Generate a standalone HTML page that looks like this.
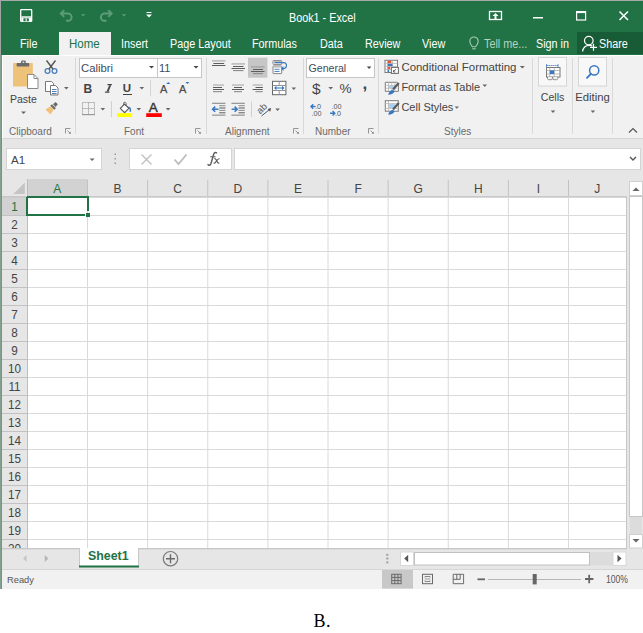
<!DOCTYPE html>
<html><head><meta charset="utf-8">
<style>
*{margin:0;padding:0;box-sizing:border-box}
html,body{width:643px;height:633px;background:#fff;overflow:hidden;position:relative;font-family:"Liberation Sans",sans-serif}
.a{position:absolute}
.t{position:absolute;white-space:nowrap;line-height:1}
svg{position:absolute;overflow:visible}
#win{left:0;top:0;width:643px;height:589px;background:#f1f1f1}
#topline{left:0;top:0;width:643px;height:1px;background:#a8a8a8}
#leftline{left:0;top:55px;width:2px;height:534px;background:linear-gradient(90deg,#84a08e 0,#84a08e 1px,#6a9c7c 1px)}
#title{left:1px;top:1px;width:642px;height:54px;background:#217346;border-left:0}
.w{color:#fff}
.tab{top:37.7px;font-size:12px;color:#fff;transform:scaleX(0.9);transform-origin:0 0}
#ribbon{left:2px;top:55px;width:641px;height:84px;background:#f1f1f1;border-bottom:1px solid #d5d5d5;border-top:1px solid #fff;border-left:1px solid #fff}
.gl{top:127px;font-size:10px;color:#6a6a6a}
.ch{top:183.2px;text-align:center;font-size:12px}
.rh{left:2px;width:25px;text-align:center;font-size:13px;transform:scaleX(0.9)}
.sep{position:absolute;width:1px;background:#d8d8d8}
.rt{font-size:11px;color:#444}
#fbar{left:2px;top:139px;width:641px;height:40px;background:#e6e6e6}
#grid{left:2px;top:179px;width:625px;height:369px;background:#fff;overflow:hidden}
#tabs{left:2px;top:548px;width:641px;height:21px;background:#e6e6e6}
#status{left:2px;top:569px;width:641px;height:20px;background:#f1f1f1;border-top:1px solid #d5d5d5}
</style></head><body>
<div class="a" id="win"></div>
<div class="a" id="topline"></div>
<div class="a" id="title"></div>
<div class="a" style="left:0;top:0;width:1px;height:55px;background:#a3a3a3"></div>

<!-- QAT icons -->
<svg style="left:0;top:0" width="643" height="32">
  <!-- save -->
  <rect x="20.7" y="9.7" width="11" height="11.6" rx="0.6" fill="none" stroke="#fff" stroke-width="1.3"/>
  <rect x="21.3" y="16.3" width="9.8" height="1.1" fill="#fff"/>
  <rect x="21.3" y="17.4" width="9.8" height="3.8" fill="#fff"/>
  <rect x="23.4" y="18.3" width="5.4" height="3" fill="#217346"/>
  <rect x="25.6" y="18.3" width="1.1" height="3" fill="#fff"/>
  <!-- undo -->
  <g fill="none" stroke="#5d9c78" stroke-width="2">
    <path d="M61 13.6 H68 A3.6 3.6 0 0 1 68 20.8 H66"/>
    <path d="M64.2 10.3 L60.9 13.6 L64.2 16.9"/>
    <path d="M111.5 13.6 H104.5 A3.6 3.6 0 0 0 104.5 20.8 H106.5"/>
    <path d="M108.3 10.3 L111.6 13.6 L108.3 16.9"/>
  </g>
  <path d="M80.8 14.2 h4.6 l-2.3 2.3z" fill="#5d9c78"/>
  <path d="M121.8 14.2 h4.6 l-2.3 2.3z" fill="#5d9c78"/>
  <!-- customize -->
  <rect x="146.5" y="12" width="5" height="1" fill="#fff"/>
  <path d="M146 14.5 h6 l-3 3z" fill="#fff"/>
  <!-- ribbon display options -->
  <rect x="489.5" y="11.5" width="12" height="8" fill="none" stroke="#fff" stroke-width="1.3"/>
  <path d="M495.5 13 l-3 3 h2 v3.5 h2 v-3.5 h2z" fill="#fff"/>
  <!-- minimize -->
  <rect x="533" y="17" width="10" height="1.5" fill="#fff"/>
  <!-- maximize -->
  <rect x="576.6" y="11.6" width="9" height="8.4" fill="none" stroke="#fff" stroke-width="1.2"/>
  <rect x="576.6" y="11.6" width="9" height="1.5" fill="#fff"/>
  <!-- close -->
  <path d="M619.5 11.5 L628 20 M628 11.5 L619.5 20" stroke="#fff" stroke-width="1.5"/>
</svg>

<div class="t w" style="left:289px;top:11.7px;font-size:12px;transform:scaleX(0.9);transform-origin:0 0">Book1 - Excel</div>

<!-- tabs -->
<div class="a" style="left:59px;top:32px;width:52px;height:24px;background:#f1f1f1"></div>
<div class="t tab" style="left:20px">File</div>
<div class="t tab" style="left:69.3px;color:#217346;transform:scaleX(0.96)">Home</div>
<div class="t tab" style="left:121px">Insert</div>
<div class="t tab" style="left:170px">Page Layout</div>
<div class="t tab" style="left:252px">Formulas</div>
<div class="t tab" style="left:320px">Data</div>
<div class="t tab" style="left:365px">Review</div>
<div class="t tab" style="left:422px">View</div>
<svg style="left:0;top:0" width="643" height="60">
  <g fill="none" stroke="#a9cbb6" stroke-width="1.1">
    <path d="M472.5 46.8 C470.5 44.5 469.8 42.5 469.8 41.2 A4.2 4.2 0 0 1 478.2 41.2 C478.2 42.5 477.5 44.5 475.5 46.8 Z"/>
    <path d="M472.3 48.8 h3.4"/>
  </g>
</svg>
<div class="t tab" style="left:484px;color:#b5d3c0">Tell me...</div>
<div class="t tab" style="left:536px">Sign in</div>
<div class="a" style="left:577px;top:32px;width:66px;height:22px;background:#185c37"></div>
<svg style="left:0;top:0" width="643" height="60">
  <g fill="none" stroke="#fff" stroke-width="1.2">
    <circle cx="588.8" cy="40.6" r="4.3"/>
    <path d="M582.6 51.5 C583 47.5 585.8 45.3 589.5 45.3 C590.5 45.3 591.5 45.6 592.3 46"/>
    <path d="M593.5 43.8 v7 M590 47.3 h7"/>
  </g>
</svg>
<div class="t tab" style="left:599px">Share</div>

<div class="a" id="ribbon"></div>
<div class="a" id="leftline"></div>

<!-- ===== RIBBON CONTENT ===== -->
<!-- group separators -->
<div class="sep" style="left:75px;top:58px;height:76px"></div>
<div class="sep" style="left:206px;top:58px;height:76px"></div>
<div class="sep" style="left:303px;top:58px;height:76px"></div>
<div class="sep" style="left:378px;top:58px;height:76px"></div>
<div class="sep" style="left:532px;top:58px;height:76px"></div>
<div class="sep" style="left:572px;top:58px;height:76px"></div>
<div class="sep" style="left:612px;top:58px;height:76px"></div>
<!-- group labels -->
<div class="t gl" style="left:9px">Clipboard</div>
<div class="t gl" style="left:124px">Font</div>
<div class="t gl" style="left:225px">Alignment</div>
<div class="t gl" style="left:315px">Number</div>
<div class="t gl" style="left:444px">Styles</div>

<svg style="left:0;top:0" width="643" height="140">
  <!-- dialog launchers -->
  <g fill="none" stroke="#8a8a8a" stroke-width="0.9">
    <path d="M65.5 133.5 v-5 h5"/><path d="M67.5 130.5 l3 3"/>
    <path d="M195.5 133.5 v-5 h5"/><path d="M197.5 130.5 l3 3"/>
    <path d="M293.5 133.5 v-5 h5"/><path d="M295.5 130.5 l3 3"/>
    <path d="M368.5 133.5 v-5 h5"/><path d="M370.5 130.5 l3 3"/>
  </g>
  <g fill="#8a8a8a">
    <path d="M68.5 133.8 h2.3 v-2.3z"/><path d="M198.5 133.8 h2.3 v-2.3z"/><path d="M296.5 133.8 h2.3 v-2.3z"/><path d="M371.5 133.8 h2.3 v-2.3z"/>
  </g>

  <!-- Paste clipboard -->
  <rect x="13" y="63" width="19.8" height="23.5" rx="0.5" fill="#efc27a"/>
  <rect x="16.6" y="63" width="12.6" height="3.6" rx="0.8" fill="#6b6b6b"/>
  <rect x="21" y="60.6" width="4.8" height="3" rx="1.4" fill="#6b6b6b"/>
  <rect x="22.6" y="61.6" width="1.6" height="1.3" fill="#f1f1f1"/>
  <path d="M27.5 74.5 h6.5 l4 4 v10 h-10.5z" fill="#fff" stroke="#8a8a8a" stroke-width="1"/>
  <path d="M34 74.5 v4 h4" fill="none" stroke="#8a8a8a" stroke-width="1"/>
  <path d="M21 111.5 h5 l-2.5 2.5z" fill="#666"/>
  <!-- scissors -->
  <g fill="none" stroke="#4a7fbd" stroke-width="1.3">
    <circle cx="47.5" cy="71" r="2.4"/><circle cx="54.5" cy="71" r="2.4"/>
  </g>
  <path d="M46.5 60.5 L53 69 M55.5 60.5 L49 69" stroke="#555" stroke-width="1.4" fill="none"/>
  <!-- copy -->
  <g fill="#fff" stroke="#777" stroke-width="1">
    <path d="M45.5 81.5 h6 l2 2 v8 h-8z"/>
    <path d="M50.5 85.5 h5 l2.5 2.5 v7 h-7.5z"/>
  </g>
  <g stroke="#4a7fbd" stroke-width="1"><path d="M52 89.5 h4.5 M52 91.5 h4.5 M52 93.5 h4.5"/></g>
  <path d="M64 87 h4.6 l-2.3 2.4z" fill="#666"/>
  <!-- format painter -->
  <path d="M45.5 109.5 l5 -3.2 l3.2 3.2 l-3.2 5 z" fill="#efc27a"/>
  <path d="M50.3 105.8 l4 4 l1.6 -1.6 l-4 -4z" fill="#6b6b6b"/>
  <path d="M53 104.3 l2.6 -2.2 l2.2 2.2 l-2.2 2.6z" fill="#6b6b6b"/>

  <!-- Font name / size boxes -->
  <rect x="79.5" y="58.5" width="78" height="19" fill="#fff" stroke="#c6c6c6"/>
  <rect x="157.5" y="58.5" width="44" height="19" fill="#fff" stroke="#c6c6c6"/>
  <path d="M149 66 h5 l-2.5 2.5z" fill="#444"/>
  <path d="M193.5 66 h5 l-2.5 2.5z" fill="#444"/>
  <!-- U dropdown etc -->
  <path d="M139.5 87 h4.6 l-2.3 2.4z" fill="#666"/>
  <rect x="150" y="80" width="1" height="16" fill="#d4d4d4"/>
  <!-- grow/shrink carets -->
  <path d="M166.2 84 l2.1 -2 l2.1 2z" fill="#3a78c2"/>
  <path d="M185.3 82 l2.1 2 l2.1 -2z" fill="#3a78c2"/>
  <!-- borders -->
  <g fill="none" stroke="#9a9a9a" stroke-width="1" stroke-dasharray="1.2 0.8">
    <rect x="82.5" y="102.5" width="12" height="12"/>
  </g>
  <path d="M88.5 102.5 v12 M82.5 108.5 h12" stroke="#9a9a9a" stroke-width="1" stroke-dasharray="1.2 0.8"/>
  <path d="M82 114.6 h13" stroke="#9a9a9a" stroke-width="1.2"/>
  <path d="M100.5 108 h4.6 l-2.3 2.4z" fill="#666"/>
  <rect x="111" y="101" width="1" height="16" fill="#d0d0d0"/>
  <!-- fill color -->
  <path d="M120.3 108.3 l4.3 -4.3 l4.3 4.3 l-4.3 4.3 z" fill="#fff" stroke="#555" stroke-width="1.1"/>
  <path d="M123.5 105 v-1.5 a1.3 1.3 0 0 1 2.6 0 v2.5" fill="none" stroke="#666" stroke-width="0.9"/>
  <path d="M128.5 106.5 c2 0.3 3 2 2.6 5 l-1.6 0.5 c0.5 -2 0 -3.5 -1 -4.5z" fill="#3a78c2"/>
  <rect x="117" y="113.2" width="15.2" height="3.8" fill="#ffff00"/>
  <path d="M136.5 108 h4.6 l-2.3 2.4z" fill="#666"/>
  <!-- font color -->
  <rect x="146.2" y="113.2" width="15.6" height="3.8" fill="#ff0000"/>
  <path d="M165.8 108 h4.6 l-2.3 2.4z" fill="#666"/>

  <!-- Alignment icons -->
  <rect x="212" y="60.1" width="13.400000000000006" height="1.6" fill="#bcbcbc"/>
  <rect x="213.4" y="63" width="10.699999999999989" height="1" fill="#5c5c5c"/>
  <rect x="212" y="65" width="13.400000000000006" height="1" fill="#5c5c5c"/>
  <rect x="231.5" y="63.1" width="13.5" height="1.6" fill="#bcbcbc"/>
  <rect x="233" y="66" width="10.5" height="1" fill="#5c5c5c"/>
  <rect x="231.5" y="68" width="13.5" height="1" fill="#5c5c5c"/>
  <rect x="233" y="70" width="10.5" height="1.1" fill="#8c8c8c"/>
  <rect x="248" y="57.7" width="19.4" height="20" fill="#c6c6c6"/>
  <rect x="251" y="66.1" width="13.5" height="1.6" fill="#a8a8a8"/>
  <rect x="253" y="69" width="10" height="1" fill="#5c5c5c"/>
  <rect x="251" y="71" width="13.5" height="1" fill="#5c5c5c"/>
  <rect x="253" y="73" width="10" height="1.1" fill="#8c8c8c"/>
  <rect x="213" y="84.3" width="11" height="1.5" fill="#bcbcbc"/>
  <rect x="213" y="87" width="9" height="1" fill="#5c5c5c"/>
  <rect x="213" y="89" width="11" height="1" fill="#5c5c5c"/>
  <rect x="213" y="91.1" width="9" height="1.1" fill="#8c8c8c"/>
  <rect x="232" y="84.3" width="12" height="1.5" fill="#bcbcbc"/>
  <rect x="234" y="87" width="8" height="1" fill="#5c5c5c"/>
  <rect x="232" y="89" width="12" height="1" fill="#5c5c5c"/>
  <rect x="234" y="91.1" width="8" height="1.1" fill="#8c8c8c"/>
  <rect x="252.6" y="84.3" width="10.200000000000017" height="1.5" fill="#bcbcbc"/>
  <rect x="255.5" y="87" width="7.300000000000011" height="1" fill="#5c5c5c"/>
  <rect x="252.6" y="89" width="10.200000000000017" height="1" fill="#5c5c5c"/>
  <rect x="255.5" y="91.1" width="7.300000000000011" height="1.1" fill="#8c8c8c"/>
    <!-- wrap text -->
  <rect x="273" y="60.6" width="8.7" height="3.8" rx="0.5" fill="#fff" stroke="#777" stroke-width="0.9"/>
  <rect x="273" y="66" width="8.7" height="7.6" rx="0.5" fill="#fff" stroke="#777" stroke-width="0.9"/>
  <rect x="273.4" y="61" width="8" height="1.2" fill="#bbb"/>
  <rect x="273.4" y="66.4" width="8" height="1.2" fill="#bbb"/>
  <path d="M274.5 62.6 h9 a3 3 0 0 1 0 6 h-1.5" fill="none" stroke="#3a78c2" stroke-width="1.1"/>
  <path d="M283.5 66.2 l-2.6 2.4 l2.6 2.4z" fill="#3a78c2"/>
  <path d="M274.5 69.3 h5 M274.5 71.5 h5" stroke="#3a78c2" stroke-width="0.9"/>
  <!-- merge -->
  <rect x="272.5" y="81.3" width="13.4" height="13.4" fill="#fff" stroke="#666" stroke-width="1"/>
  <path d="M272.5 85.5 h13.4 M272.5 90.5 h13.4 M279.2 81.3 v4.2 M279.2 90.5 v4.2" stroke="#888" stroke-width="0.9"/>
  <path d="M275.5 88 h7.5" stroke="#3a78c2" stroke-width="1.1"/>
  <path d="M276.5 85.8 l-2.5 2.2 l2.5 2.2z M282 85.8 l2.5 2.2 l-2.5 2.2z" fill="#3a78c2"/>
  <path d="M291.5 87.5 h4.6 l-2.3 2.4z" fill="#666"/>
  <!-- indents -->
  <rect x="212.1" y="102.7" width="13.400000000000006" height="1.3" fill="#999"/>
  <rect x="219.2" y="105.2" width="6.300000000000011" height="1" fill="#8c8c8c"/>
  <rect x="219.2" y="107.5" width="6.300000000000011" height="1" fill="#5c5c5c"/>
  <rect x="219.2" y="109.9" width="6.300000000000011" height="1" fill="#8c8c8c"/>
  <rect x="219.2" y="112.3" width="6.300000000000011" height="1" fill="#5c5c5c"/>
  <rect x="212.1" y="114.5" width="13.400000000000006" height="1.3" fill="#999"/>
  <rect x="231.4" y="102.7" width="13.400000000000006" height="1.3" fill="#999"/>
  <rect x="238.5" y="105.2" width="6.300000000000011" height="1" fill="#8c8c8c"/>
  <rect x="238.5" y="107.5" width="6.300000000000011" height="1" fill="#5c5c5c"/>
  <rect x="238.5" y="109.9" width="6.300000000000011" height="1" fill="#8c8c8c"/>
  <rect x="238.5" y="112.3" width="6.300000000000011" height="1" fill="#5c5c5c"/>
  <rect x="231.4" y="114.5" width="13.400000000000006" height="1.3" fill="#999"/>
    <path d="M218.5 109.2 h-5 M215.2 106.6 l-2.6 2.6 l2.6 2.6" fill="none" stroke="#3a78c2" stroke-width="1.6"/>
  <path d="M231.6 109.2 h5.2 M234.6 106.6 l2.6 2.6 l-2.6 2.6" fill="none" stroke="#3a78c2" stroke-width="1.6"/>
  <rect x="251" y="101.5" width="1" height="15.5" fill="#d0d0d0"/>
  <!-- orientation ab -->
  <g transform="translate(262 108.5) rotate(-45)">
    <text x="-5.5" y="3" font-family="Liberation Sans" font-size="9.5" fill="#555">ab</text>
  </g>
  <path d="M261.5 116 l8 -6.5" stroke="#555" stroke-width="1"/>
  <path d="M271.2 108 l-1 3.8 l-2.6 -2.8z" fill="#555"/>
  <path d="M275.3 108.5 h4.6 l-2.3 2.4z" fill="#666"/>

  <!-- Number -->
  <rect x="306.5" y="58.5" width="68" height="19" fill="#fff" stroke="#c6c6c6"/>
  <path d="M366.8 66.5 h4.6 l-2.3 2.4z" fill="#444"/>
  <path d="M328.4 87 h4.6 l-2.3 2.4z" fill="#666"/>
  <!-- increase decimal -->
  <g font-family="Liberation Sans" font-size="7.2" fill="#555">
    <text x="315" y="108.6">.0</text>
    <text x="311.5" y="115.6">.00</text>
    <text x="331.5" y="108.6">.00</text>
    <text x="335" y="115.6">.0</text>
  </g>
  <path d="M315.5 106.5 h-4.5 M313.2 104.3 l-2.2 2.2 l2.2 2.2" fill="none" stroke="#3a78c2" stroke-width="1.4"/>
  <path d="M330 113.3 h4.6 M332.6 111.1 l2.2 2.2 l-2.2 2.2" fill="none" stroke="#3a78c2" stroke-width="1.4"/>

  <!-- Styles icons -->
  <rect x="385" y="60.3" width="12.5" height="12.2" fill="#fff" stroke="#7a7a7a" stroke-width="1"/>
  <path d="M385 63.4h12.5M385 66.4h12.5M385 69.4h12.5M387.5 60.3v12.2M392.5 60.3v12.2" stroke="#b0b0b0" stroke-width="0.8"/>
  <rect x="387.8" y="60.8" width="3.4" height="2.3" fill="#e8502e"/>
  <rect x="387.8" y="63.8" width="4.6" height="2.3" fill="#3a78c2"/>
  <rect x="387.8" y="66.8" width="2.4" height="2.3" fill="#e8502e"/>
  <rect x="387.8" y="69.8" width="1.4" height="2.3" fill="#3a78c2"/>
  <rect x="391.4" y="67.4" width="7" height="6" fill="#fff" stroke="#6a6a6a" stroke-width="1"/>
  <path d="M393.2 71.8 l2.8 -2.6 M393.5 70.2 v1.8 h1.8" fill="none" stroke="#555" stroke-width="0.9"/>
  <path d="M519.8 66 h5 l-2.5 2.5z" fill="#666"/>
  <!-- format as table -->
  <path d="M385.3 82.3h11.5l1.6 1.5v7.5h-13.1z" fill="#fff" stroke="#7a7a7a" stroke-width="1"/>
  <path d="M385.3 85.3h12M385.3 88.3h12M388.5 82.3v9M391.7 82.3v9M394.9 82.3v9" stroke="#b4b4b4" stroke-width="0.8"/>
  <rect x="389" y="85.8" width="6" height="2.5" fill="#a9cdee"/>
  <path d="M398.8 83 L393 89.6" stroke="#5a5a5a" stroke-width="2.2"/>
  <path d="M388.2 94.8 c0.5 -2.5 2 -4.5 4.5 -5 l1.8 1.5 c-0.5 2 -3 3.5 -6.3 3.5z" fill="#3a78c2"/>
  <path d="M482.5 84.6 h4.6 l-2.3 2.4z" fill="#666"/>
  <!-- cell styles -->
  <rect x="385.3" y="100.7" width="13" height="10.5" fill="#fff" stroke="#7a7a7a" stroke-width="1"/>
  <path d="M385.3 103.6h13M385.3 108.4h13M388.4 100.7v10.5" stroke="#b4b4b4" stroke-width="0.8"/>
  <rect x="388.9" y="104.1" width="6.5" height="4" fill="#a9cdee"/>
  <path d="M398.8 103 L393 109.6" stroke="#5a5a5a" stroke-width="2.2"/>
  <path d="M388.2 114.8 c0.5 -2.5 2 -4.5 4.5 -5 l1.8 1.5 c-0.5 2 -3 3.5 -6.3 3.5z" fill="#3a78c2"/>
  <path d="M454.6 106.5 h4.4 l-2.2 2.3z" fill="#666"/>

  <!-- Cells -->
  <rect x="538.5" y="57.5" width="28" height="28.5" fill="#f8f8f8" stroke="#d6d6d6"/>
  <rect x="546.5" y="67.5" width="13.5" height="9.5" fill="#fff" stroke="#777" stroke-width="1"/>
  <path d="M546.5 70.5h13.5M546.5 74h13.5M549.8 67.5v9.5M554.2 67.5v9.5" stroke="#aaa" stroke-width="0.8"/>
  <rect x="549.8" y="70.4" width="4.4" height="3.6" fill="#3a78c2"/>
  <path d="M546.5 65.5 h11.5" stroke="#3a78c2" stroke-width="0.9" stroke-dasharray="1.3 0.7"/>
  <path d="M546.5 64.2 v2.6 M558 64.2 v2.6" stroke="#3a78c2" stroke-width="0.9"/>
  <path d="M547.5 77 v1.5 a1.2 1.2 0 0 0 1.2 1.2 h2.5 a1.2 1.2 0 0 0 1.2 -1.2 v-1.5 M552.8 77 v1.5 a1.2 1.2 0 0 0 1.2 1.2 h2.5 a1.2 1.2 0 0 0 1.2 -1.2 v-1.5" fill="#f2f2f2" stroke="#888" stroke-width="0.9"/>
  <path d="M550.7 110.5 h4.6 l-2.3 2.4z" fill="#666"/>
  <!-- Editing -->
  <rect x="578.5" y="57.5" width="28" height="28.5" fill="#f8f8f8" stroke="#d6d6d6"/>
  <circle cx="594.2" cy="70.4" r="4.6" fill="none" stroke="#3a78c2" stroke-width="1.5"/>
  <path d="M590.9 73.8 L587 77.8" stroke="#3a78c2" stroke-width="1.9" stroke-linecap="round"/>
  <path d="M590.6 110.5 h4.6 l-2.3 2.4z" fill="#666"/>
  <!-- collapse -->
  <path d="M629 132.5 l4 -4 l4 4" fill="none" stroke="#555" stroke-width="1.2"/>
</svg>

<div class="t" style="left:10px;top:94px;font-size:10.5px;color:#444">Paste</div>
<div class="t rt" style="left:81px;top:63px;font-size:11.3px;color:#3f4a5a">Calibri</div>
<div class="t rt" style="left:159px;top:63px;color:#3f4a5a">11</div>
<div class="t" style="left:83.5px;top:83px;font-size:12px;font-weight:bold;color:#444">B</div>
<svg style="left:0;top:0" width="200" height="100"><g fill="#454545">
  <path d="M107.6 84 h4.4 l-0.3 1.3 h-4.4z"/>
  <path d="M109.2 85.2 h2 l-2.6 6.4 h-2z"/>
  <path d="M105.2 91.5 h4.4 l-0.3 1.3 h-4.4z"/>
</g></svg>
<div class="t" style="left:122.8px;top:83px;font-size:11.5px;font-weight:bold;color:#444">U</div>
<div class="a" style="left:122.5px;top:94px;width:9px;height:1.2px;background:#444"></div>
<div class="t" style="left:160px;top:83.6px;font-size:11px;color:#4a4a4a;-webkit-text-stroke:0.25px #4a4a4a">A</div>
<div class="t" style="left:179px;top:83.6px;font-size:11px;color:#4a4a4a;-webkit-text-stroke:0.25px #4a4a4a">A</div>
<div class="t" style="left:148.8px;top:101px;font-size:13.5px;color:#333;-webkit-text-stroke:0.4px #333">A</div>
<div class="t" style="left:308.5px;top:63px;font-size:10.6px;color:#3f4a5a">General</div>
<div class="t" style="left:312px;top:81.2px;font-size:15.5px;color:#444">$</div>
<div class="t" style="left:339.5px;top:81.8px;font-size:13.6px;color:#444">%</div>
<div class="t" style="left:362.5px;top:75.4px;font-size:17px;font-weight:bold;color:#444">,</div>
<div class="t rt" style="left:401.4px;top:61.5px;font-size:11.45px">Conditional Formatting</div>
<div class="t rt" style="left:401.4px;top:82.3px">Format as Table</div>
<div class="t rt" style="left:401.4px;top:102.3px">Cell Styles</div>
<div class="t" style="left:540.8px;top:91.8px;font-size:10.6px;color:#444">Cells</div>
<div class="t" style="left:575.3px;top:92.2px;font-size:11.3px;color:#444">Editing</div>

<div class="a" id="fbar"></div>
<!-- formula bar -->
<div class="a" style="left:6px;top:148px;width:96px;height:22px;background:#fff;border:1px solid #d4d4d4"></div>
<div class="t" style="left:11px;top:154px;font-size:11.6px;color:#444">A1</div>
<div class="a" style="left:129px;top:148px;width:103px;height:22px;background:#fff;border:1px solid #d4d4d4"></div>
<div class="a" style="left:234px;top:148px;width:407px;height:22px;background:#fff;border:1px solid #d4d4d4"></div>
<svg style="left:0;top:0" width="643" height="180">
  <path d="M89.6 158.5 h5 l-2.5 2.5z" fill="#666"/>
  <g fill="#999"><rect x="114.5" y="153.5" width="1.5" height="1.5"/><rect x="114.5" y="158" width="1.5" height="1.5"/><rect x="114.5" y="162.5" width="1.5" height="1.5"/></g>
  <path d="M141.5 154.5 l10 10 M151.5 154.5 l-10 10" stroke="#c0c0c0" stroke-width="1.4"/>
  <path d="M174.5 159.5 l4 4.5 l8 -9.5" fill="none" stroke="#bdbdbd" stroke-width="1.8"/>
  <path d="M630 157 l3 3 l3 -3" fill="none" stroke="#555" stroke-width="1.4"/>
</svg>
<svg style="left:0;top:0" width="643" height="180"><g fill="none" stroke="#5a5a5a" stroke-linecap="round">
  <path d="M208 164.6 C208.8 165.8 210.3 165.4 211 163.5 L213.6 154.5 C214.2 152.6 215.4 152 216.6 152.8" stroke-width="1.4"/>
  <path d="M210.6 156.8 H215.2" stroke-width="1"/>
  <path d="M214.8 158.6 C215.8 158.4 216.2 159.5 216.8 161 C217.3 162.4 217.8 163.3 219 163" stroke-width="1.2"/>
  <path d="M219.2 158.8 C218 158.6 216.5 161 215.7 162 C215.2 162.8 214.6 163.4 214 163" stroke-width="1.1"/>
</g></svg>

<div class="a" id="grid"></div>
<svg style="left:0;top:0" width="643" height="560">
  <rect x="2" y="179" width="625" height="17" fill="#e6e6e6"/>
  <rect x="2" y="196" width="25" height="352" fill="#e6e6e6"/>
  <rect x="27" y="179" width="60.5" height="17" fill="#d2d2d2"/>
  <rect x="2" y="197" width="25" height="18" fill="#d2d2d2"/>
  <path d="M13.3 194 L24.8 182.6 V194 Z" fill="#c4c4c4"/>
  <path d="M87.50 198V548M147.62 198V548M207.75 198V548M267.88 198V548M328.00 198V548M388.12 198V548M448.25 198V548M508.38 198V548M568.50 198V548M28 215.5H626M28 233.5H626M28 251.5H626M28 269.5H626M28 287.5H626M28 305.5H626M28 323.5H626M28 341.5H626M28 359.5H626M28 377.5H626M28 395.5H626M28 413.5H626M28 431.5H626M28 449.5H626M28 467.5H626M28 485.5H626M28 503.5H626M28 521.5H626M28 539.5H626" stroke="#dadada" stroke-width="1" fill="none"/>
  <path d="M87.50 180V196M147.62 180V196M207.75 180V196M267.88 180V196M328.00 180V196M388.12 180V196M448.25 180V196M508.38 180V196M568.50 180V196M2 215.5H27M2 233.5H27M2 251.5H27M2 269.5H27M2 287.5H27M2 305.5H27M2 323.5H27M2 341.5H27M2 359.5H27M2 377.5H27M2 395.5H27M2 413.5H27M2 431.5H27M2 449.5H27M2 467.5H27M2 485.5H27M2 503.5H27M2 521.5H27M2 539.5H27" stroke="#c2c2c2" stroke-width="1" fill="none"/>
  <path d="M27.5 179V548" stroke="#bdbdbd" stroke-width="1" fill="none"/>
  <rect x="2" y="196" width="625" height="1.7" fill="#c8c8c8"/>
  <rect x="626" y="196" width="1" height="352" fill="#c6c6c6"/>
  <path d="M27 197H88V211" fill="none" stroke="#217346" stroke-width="2"/>
  <path d="M27 197V215H85" fill="none" stroke="#217346" stroke-width="2"/>
  <rect x="86" y="213" width="4" height="4" fill="#217346"/>
</svg>
<div class="a" style="left:0;top:0;width:643px;height:548px;overflow:hidden"><div class="t ch" style="left:27.00px;width:60.50px;color:#217346">A</div><div class="t ch" style="left:87.50px;width:60.12px;color:#444">B</div><div class="t ch" style="left:147.62px;width:60.12px;color:#444">C</div><div class="t ch" style="left:207.75px;width:60.12px;color:#444">D</div><div class="t ch" style="left:267.88px;width:60.12px;color:#444">E</div><div class="t ch" style="left:328.00px;width:60.12px;color:#444">F</div><div class="t ch" style="left:388.12px;width:60.12px;color:#444">G</div><div class="t ch" style="left:448.25px;width:60.12px;color:#444">H</div><div class="t ch" style="left:508.38px;width:60.12px;color:#444">I</div><div class="t ch" style="left:568.50px;width:57.50px;color:#444">J</div><div class="t rh" style="top:200.3px;color:#217346">1</div><div class="t rh" style="top:218.3px;color:#444">2</div><div class="t rh" style="top:236.3px;color:#444">3</div><div class="t rh" style="top:254.3px;color:#444">4</div><div class="t rh" style="top:272.3px;color:#444">5</div><div class="t rh" style="top:290.3px;color:#444">6</div><div class="t rh" style="top:308.3px;color:#444">7</div><div class="t rh" style="top:326.3px;color:#444">8</div><div class="t rh" style="top:344.3px;color:#444">9</div><div class="t rh" style="top:362.3px;color:#444">10</div><div class="t rh" style="top:380.3px;color:#444">11</div><div class="t rh" style="top:398.3px;color:#444">12</div><div class="t rh" style="top:416.3px;color:#444">13</div><div class="t rh" style="top:434.3px;color:#444">14</div><div class="t rh" style="top:452.3px;color:#444">15</div><div class="t rh" style="top:470.3px;color:#444">16</div><div class="t rh" style="top:488.3px;color:#444">17</div><div class="t rh" style="top:506.3px;color:#444">18</div><div class="t rh" style="top:524.3px;color:#444">19</div><div class="t rh" style="top:542.3px;color:#444">20</div></div>

<div class="a" id="tabs"></div>
<div class="a" id="status"></div>
<svg style="left:0;top:0" width="643" height="600">
  <!-- vertical scrollbar -->
  <rect x="627" y="179" width="16" height="369" fill="#e6e6e6"/>
  <rect x="629.5" y="181.5" width="13" height="14" fill="#fff" stroke="#d0d0d0"/>
  <path d="M632.5 191 l3.5 -3.5 l3.5 3.5z" fill="#666"/>
  <rect x="629.5" y="196.5" width="13" height="320" fill="#fff" stroke="#c6c6c6"/>
  <rect x="630" y="517" width="12" height="17" fill="#dcdcdc"/>
  <rect x="629.5" y="534.5" width="13" height="13.5" fill="#fff" stroke="#d0d0d0"/>
  <path d="M632.5 539 l3.5 3.5 l3.5 -3.5z" fill="#666"/>
  <rect x="2" y="548" width="625" height="1.3" fill="#c6c6c6"/>
  <!-- tab bar -->
  <path d="M23 558.5 l3.5 -3.5 v7z" fill="#c4c4c4"/>
  <path d="M48.3 558.5 l-3.5 -3.5 v7z" fill="#b4b4b4"/>
  <rect x="79" y="548" width="59.5" height="19" fill="#fff"/>
  <path d="M79.5 548V567M138.5 548V567" stroke="#c8c8c8" stroke-width="1"/>
  <rect x="79" y="565.5" width="60" height="2" fill="#217346"/>
  <circle cx="170.5" cy="558.7" r="7.2" fill="none" stroke="#7a7a7a" stroke-width="1.2"/>
  <path d="M166 558.7 h9 M170.5 554.2 v9" stroke="#6a6a6a" stroke-width="1.4"/>
  <g fill="#a0a0a0"><rect x="386.3" y="553.8" width="2" height="2"/><rect x="386.3" y="557.5" width="2" height="2"/><rect x="386.3" y="561.4" width="2" height="2"/></g>
  <rect x="400.5" y="552" width="13" height="13.5" fill="#fff" stroke="#d8d8d8" stroke-width="1"/>
  <path d="M404.2 558.5 l4 -3.7 v7.4z" fill="#555"/>
  <rect x="414.5" y="552.5" width="175" height="12.5" fill="#fff" stroke="#c0c0c0"/>
  <rect x="590" y="552" width="23" height="13.5" fill="#dcdcdc"/>
  <rect x="613" y="552" width="13" height="13.5" fill="#fff" stroke="#d8d8d8" stroke-width="1"/>
  <path d="M621.5 558.5 l-4 -3.7 v7.4z" fill="#555"/>
  <!-- status bar -->
  <rect x="382" y="570" width="31" height="18.6" fill="#c8c8c8"/>
  <path d="M425 577.5 v-1 h5 v1 M425 580.5 v1 h5 v-1" fill="none" stroke="#888" stroke-width="1"/>
  <rect x="424.8" y="578.2" width="5.4" height="1.6" fill="#bbb"/>
  <g fill="none" stroke="#6a6a6a" stroke-width="1">
    <rect x="391.7" y="574.3" width="9.4" height="9.4"/>
    <path d="M394.8 574.3v9.4M398 574.3v9.4M391.7 577.4h9.4M391.7 580.6h9.4"/>
    <rect x="422.5" y="574.3" width="10" height="9.4"/>
    <path d="M454.2 574.3h9.4v9.4h-10.4v-9.4h1 M456.8 574.3v5 M460.2 574.3v5 M453.2 579.3h7"/>
  </g>
  <rect x="477.5" y="578.4" width="7.5" height="1.8" fill="#666"/>
  <rect x="488" y="579.2" width="93" height="0.8" fill="#a8a8a8"/>
  <rect x="532.7" y="574" width="4" height="10.4" fill="#666"/>
  <path d="M585 579h8.4M589.2 574.8v8.4" stroke="#666" stroke-width="1.8"/>
</svg>
<div class="t" style="left:88px;top:550px;font-size:12.4px;font-weight:bold;color:#217346">Sheet1</div>
<div class="t" style="left:6.8px;top:574.8px;font-size:9.8px;color:#555;transform:scaleX(0.95);transform-origin:0 0">Ready</div>
<div class="t" style="left:605.5px;top:574.6px;font-size:10px;color:#555;transform:scaleX(0.86);transform-origin:0 0">100%</div>

<div class="t" style="left:313.5px;top:611.8px;font-family:'Liberation Serif',serif;font-size:18px;letter-spacing:0.6px;color:#000">B.</div>
</body></html>
